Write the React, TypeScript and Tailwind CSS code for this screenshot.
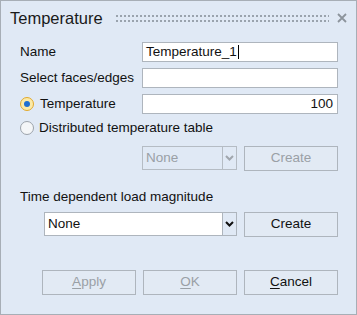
import React from "react";

const font = { fontFamily: '"Liberation Sans", Arial, sans-serif' };

function Radio({ checked }: { checked?: boolean }) {
  return (
    <span
      className={`flex h-[14px] w-[14px] items-center justify-center rounded-full border ${
        checked ? "border-[#e2a92c] bg-[#fbeaa8]" : "border-[#9ca3ab] bg-[#f4f6f8]"
      }`}
    >
      {checked && <span className="h-[6px] w-[6px] rounded-full bg-[#1f6fd1]" />}
    </span>
  );
}

function Chevron({ color }: { color: string }) {
  return (
    <svg width="9" height="6" viewBox="0 0 9 6">
      <path d="M1 1 L4.5 4.5 L8 1" fill="none" stroke={color} strokeWidth="2" />
    </svg>
  );
}

function Btn({ children, disabled }: { children: React.ReactNode; disabled?: boolean }) {
  return (
    <div
      className={`flex h-[25px] w-[94px] items-center justify-center border border-[#aeb5bd] bg-[#e2eaf4] text-[13.5px] ${
        disabled ? "text-[#9aa0a6]" : "text-[#111]"
      }`}
    >
      {children}
    </div>
  );
}

export default function App() {
  return (
    <div className="h-[315px] w-[357px] border border-[#a7aeb6] bg-[#e0e9f5] text-[#111]" style={font}>
      {/* title bar */}
      <div className="flex h-[34px] items-center pl-[9px] pr-[9px]">
        <span className="text-[16.5px] text-[#1a1a1a]">Temperature</span>
        <div className="ml-[12px] flex h-[7px] flex-1 flex-col justify-between">
          <div className="h-[2px] bg-[radial-gradient(circle,#9aa3ad_1px,transparent_1px)] bg-[length:4px_2px]" />
          <div className="h-[2px] bg-[radial-gradient(circle,#9aa3ad_1px,transparent_1px)] bg-[length:4px_2px]" />
        </div>
        <svg className="ml-[8px]" width="10" height="10" viewBox="0 0 10 10">
          <path d="M1 1 L9 9 M9 1 L1 9" stroke="#8c949c" strokeWidth="1.8" />
        </svg>
      </div>

      <div className="flex flex-col pl-[19px] pr-[18px] pt-[7px] text-[13.5px]">
        <div className="flex h-[20px] items-center">
          <span className="w-[122px]">Name</span>
          <div className="flex h-[20px] flex-1 items-center border border-[#aeb5bd] bg-white pl-[3px]">
            Temperature_1<span className="ml-[1px] h-[14px] w-[1px] bg-black" />
          </div>
        </div>
        <div className="mt-[6px] flex h-[20px] items-center">
          <span className="w-[122px]">Select faces/edges</span>
          <div className="h-[20px] flex-1 border border-[#aeb5bd] bg-white" />
        </div>
        <div className="mt-[6px] flex h-[20px] items-center">
          <div className="flex w-[122px] items-center gap-[6px]">
            <Radio checked />
            <span>Temperature</span>
          </div>
          <div className="flex h-[20px] flex-1 items-center justify-end border border-[#aeb5bd] bg-white pr-[4px]">
            100
          </div>
        </div>
        <div className="mt-[5px] flex h-[18px] items-center gap-[5px]">
          <Radio />
          <span>Distributed temperature table</span>
        </div>
        <div className="mt-[9px] flex h-[24px] items-center justify-end gap-[7px]">
          <div className="flex h-[24px] w-[95px] border border-[#b5bcc4]">
            <div className="flex flex-1 items-center pl-[3px] text-[#9aa0a6]">None</div>
            <div className="flex w-[14px] items-center justify-center border-l border-[#b5bcc4]">
              <Chevron color="#a0a6ad" />
            </div>
          </div>
          <Btn disabled>Create</Btn>
        </div>
        <div className="mt-[19px] flex h-[16px] items-center">Time dependent load magnitude</div>
        <div className="mt-[7px] flex h-[24px] items-center justify-end gap-[7px]">
          <div className="flex h-[24px] w-[193px] border border-[#aeb5bd]">
            <div className="flex flex-1 items-center bg-white pl-[3px]">None</div>
            <div className="flex w-[14px] items-center justify-center border-l border-[#aeb5bd]">
              <Chevron color="#111" />
            </div>
          </div>
          <Btn>Create</Btn>
        </div>
        <div className="mt-[34px] flex justify-end gap-[7px]">
          <Btn disabled>
            <span className="underline underline-offset-2">A</span>pply
          </Btn>
          <Btn disabled>
            <span className="underline underline-offset-2">O</span>K
          </Btn>
          <Btn>
            <span className="underline underline-offset-2">C</span>ancel
          </Btn>
        </div>
      </div>
    </div>
  );
}
